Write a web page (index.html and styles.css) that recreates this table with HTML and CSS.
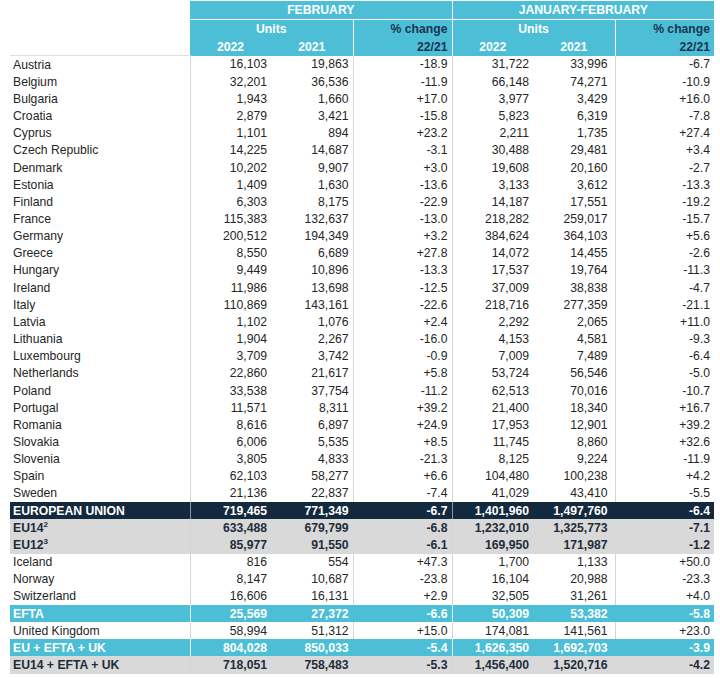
FILE: index.html
```html
<!DOCTYPE html>
<html>
<head>
<meta charset="utf-8">
<link rel="stylesheet" href="styles.css">
</head>
<body>
<table class="reg">
<colgroup>
<col class="c-label"><col class="c-num"><col class="c-num2"><col class="c-pct"><col class="c-num"><col class="c-num2"><col class="c-pct">
</colgroup>
<thead>
<tr class="h1"><th class="blank"></th><th colspan="3" class="hc">FEBRUARY</th><th colspan="3" class="hc hl">JANUARY-FEBRUARY</th></tr>
<tr class="h2"><th class="blank"></th><th colspan="2" class="hc">Units</th><th class="hp hl">% change</th><th colspan="2" class="hc hl">Units</th><th class="hp hl">% change</th></tr>
<tr class="h3"><th class="blank"></th><th class="hc">2022</th><th class="hc">2021</th><th class="hp hl">22/21</th><th class="hc hl">2022</th><th class="hc">2021</th><th class="hp hl">22/21</th></tr>
</thead>
<tbody>
<tr class="first"><td>Austria</td><td>16,103</td><td>19,863</td><td>-18.9</td><td>31,722</td><td>33,996</td><td>-6.7</td></tr>
<tr><td>Belgium</td><td>32,201</td><td>36,536</td><td>-11.9</td><td>66,148</td><td>74,271</td><td>-10.9</td></tr>
<tr><td>Bulgaria</td><td>1,943</td><td>1,660</td><td>+17.0</td><td>3,977</td><td>3,429</td><td>+16.0</td></tr>
<tr><td>Croatia</td><td>2,879</td><td>3,421</td><td>-15.8</td><td>5,823</td><td>6,319</td><td>-7.8</td></tr>
<tr><td>Cyprus</td><td>1,101</td><td>894</td><td>+23.2</td><td>2,211</td><td>1,735</td><td>+27.4</td></tr>
<tr><td>Czech Republic</td><td>14,225</td><td>14,687</td><td>-3.1</td><td>30,488</td><td>29,481</td><td>+3.4</td></tr>
<tr><td>Denmark</td><td>10,202</td><td>9,907</td><td>+3.0</td><td>19,608</td><td>20,160</td><td>-2.7</td></tr>
<tr><td>Estonia</td><td>1,409</td><td>1,630</td><td>-13.6</td><td>3,133</td><td>3,612</td><td>-13.3</td></tr>
<tr><td>Finland</td><td>6,303</td><td>8,175</td><td>-22.9</td><td>14,187</td><td>17,551</td><td>-19.2</td></tr>
<tr><td>France</td><td>115,383</td><td>132,637</td><td>-13.0</td><td>218,282</td><td>259,017</td><td>-15.7</td></tr>
<tr><td>Germany</td><td>200,512</td><td>194,349</td><td>+3.2</td><td>384,624</td><td>364,103</td><td>+5.6</td></tr>
<tr><td>Greece</td><td>8,550</td><td>6,689</td><td>+27.8</td><td>14,072</td><td>14,455</td><td>-2.6</td></tr>
<tr><td>Hungary</td><td>9,449</td><td>10,896</td><td>-13.3</td><td>17,537</td><td>19,764</td><td>-11.3</td></tr>
<tr><td>Ireland</td><td>11,986</td><td>13,698</td><td>-12.5</td><td>37,009</td><td>38,838</td><td>-4.7</td></tr>
<tr><td>Italy</td><td>110,869</td><td>143,161</td><td>-22.6</td><td>218,716</td><td>277,359</td><td>-21.1</td></tr>
<tr><td>Latvia</td><td>1,102</td><td>1,076</td><td>+2.4</td><td>2,292</td><td>2,065</td><td>+11.0</td></tr>
<tr><td>Lithuania</td><td>1,904</td><td>2,267</td><td>-16.0</td><td>4,153</td><td>4,581</td><td>-9.3</td></tr>
<tr><td>Luxembourg</td><td>3,709</td><td>3,742</td><td>-0.9</td><td>7,009</td><td>7,489</td><td>-6.4</td></tr>
<tr><td>Netherlands</td><td>22,860</td><td>21,617</td><td>+5.8</td><td>53,724</td><td>56,546</td><td>-5.0</td></tr>
<tr><td>Poland</td><td>33,538</td><td>37,754</td><td>-11.2</td><td>62,513</td><td>70,016</td><td>-10.7</td></tr>
<tr><td>Portugal</td><td>11,571</td><td>8,311</td><td>+39.2</td><td>21,400</td><td>18,340</td><td>+16.7</td></tr>
<tr><td>Romania</td><td>8,616</td><td>6,897</td><td>+24.9</td><td>17,953</td><td>12,901</td><td>+39.2</td></tr>
<tr><td>Slovakia</td><td>6,006</td><td>5,535</td><td>+8.5</td><td>11,745</td><td>8,860</td><td>+32.6</td></tr>
<tr><td>Slovenia</td><td>3,805</td><td>4,833</td><td>-21.3</td><td>8,125</td><td>9,224</td><td>-11.9</td></tr>
<tr><td>Spain</td><td>62,103</td><td>58,277</td><td>+6.6</td><td>104,480</td><td>100,238</td><td>+4.2</td></tr>
<tr><td>Sweden</td><td>21,136</td><td>22,837</td><td>-7.4</td><td>41,029</td><td>43,410</td><td>-5.5</td></tr>
<tr class="eu"><td>EUROPEAN UNION</td><td>719,465</td><td>771,349</td><td>-6.7</td><td>1,401,960</td><td>1,497,760</td><td>-6.4</td></tr>
<tr class="grey"><td>EU14<sup>2</sup></td><td>633,488</td><td>679,799</td><td>-6.8</td><td>1,232,010</td><td>1,325,773</td><td>-7.1</td></tr>
<tr class="grey"><td>EU12<sup>3</sup></td><td>85,977</td><td>91,550</td><td>-6.1</td><td>169,950</td><td>171,987</td><td>-1.2</td></tr>
<tr><td>Iceland</td><td>816</td><td>554</td><td>+47.3</td><td>1,700</td><td>1,133</td><td>+50.0</td></tr>
<tr><td>Norway</td><td>8,147</td><td>10,687</td><td>-23.8</td><td>16,104</td><td>20,988</td><td>-23.3</td></tr>
<tr><td>Switzerland</td><td>16,606</td><td>16,131</td><td>+2.9</td><td>32,505</td><td>31,261</td><td>+4.0</td></tr>
<tr class="teal"><td>EFTA</td><td>25,569</td><td>27,372</td><td>-6.6</td><td>50,309</td><td>53,382</td><td>-5.8</td></tr>
<tr><td>United Kingdom</td><td>58,994</td><td>51,312</td><td>+15.0</td><td>174,081</td><td>141,561</td><td>+23.0</td></tr>
<tr class="teal"><td>EU + EFTA + UK</td><td>804,028</td><td>850,033</td><td>-5.4</td><td>1,626,350</td><td>1,692,703</td><td>-3.9</td></tr>
<tr class="grey"><td>EU14 + EFTA + UK</td><td>718,051</td><td>758,483</td><td>-5.3</td><td>1,456,400</td><td>1,520,716</td><td>-4.2</td></tr>
</tbody>
</table>
</body>
</html>
```

FILE: styles.css
```css
html, body {
  margin: 0;
  padding: 0;
  background: #ffffff;
}

body {
  padding: 1px 0 0 10px;
  font-family: "Liberation Sans", Arial, sans-serif;
  font-size: 12.2px;
  color: #262626;
}

.reg {
  border-collapse: collapse;
  table-layout: fixed;
  width: 704px;
}

.c-label { width: 180px; }
.c-num { width: 81px; }
.c-num2 { width: 82px; }
.c-pct { width: 99px; }

.reg th {
  padding: 0 4px;
  font-weight: bold;
  line-height: 14px;
  background: #4cbfd6;
  color: #ffffff;
}

.reg th.blank {
  background: #ffffff;
}

.h1 th { height: 18px; }
.h2 th { height: 17.5px; }
.h3 th { height: 17.5px; }

.h1 th.hc, .h1 th.hl {
  border-bottom: 1px solid #ffffff;
}

.hc { text-align: center; }

.hp {
  text-align: right;
  color: #1b3550 !important;
}

.hl { border-left: 1px solid #ffffff; }

.reg td {
  height: 17.16px;
  padding: 0 4px;
  line-height: 14px;
  text-align: right;
  white-space: nowrap;
  color: #262626;
}

.reg td:first-child {
  text-align: left;
  padding-left: 3px;
}

.reg td:nth-child(2),
.reg td:nth-child(4),
.reg td:nth-child(5),
.reg td:nth-child(7) {
  border-left: 1px solid #d4d4d4;
}

.reg td:nth-child(6) {
  padding-right: 7px;
}

.reg tr.first td:first-child {
  border-top: 1px solid #e0e0e0;
}

.reg tr.eu td {
  background: #13293e;
  color: #ffffff;
  font-weight: bold;
}

.reg tr.eu td:nth-child(2),
.reg tr.eu td:nth-child(5) {
  border-left-color: #8a97a3;
}

.reg tr.eu td:nth-child(4),
.reg tr.eu td:nth-child(7) {
  border-left-color: #13293e;
}

.reg tr.grey td {
  background: #d9d9d9;
  color: #1e2c3a;
  font-weight: bold;
}

.reg tr.grey td:nth-child(4),
.reg tr.grey td:nth-child(7) {
  border-left-color: #d9d9d9;
}

.reg tr.teal td {
  background: #4cbfd6;
  color: #ffffff;
  font-weight: bold;
}

.reg tr.teal td:nth-child(4),
.reg tr.teal td:nth-child(7) {
  border-left-color: #4cbfd6;
}

.reg tr.teal td:nth-child(2),
.reg tr.teal td:nth-child(5) {
  border-left-color: #e6f6fa;
}

sup {
  font-size: 8px;
  line-height: 0;
  vertical-align: 5px;
}
```
